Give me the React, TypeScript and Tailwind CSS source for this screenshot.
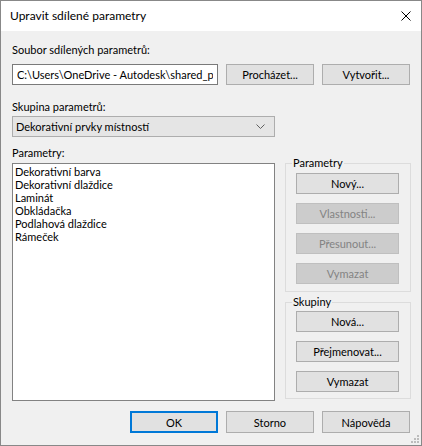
import React from "react";

const font = "font-['Lato','Noto_Sans',sans-serif]";

function Btn({
  children,
  className = "",
  disabled,
}: {
  children: React.ReactNode;
  className?: string;
  disabled?: boolean;
}) {
  return (
    <button
      disabled={disabled}
      className={
        "flex h-[21px] items-center justify-center border leading-none " +
        (disabled
          ? "border-[#bfbfbf] bg-[#cccccc] text-[#838383] "
          : "border-[#adadad] bg-[#e1e1e1] text-black ") +
        className
      }
    >
      {children}
    </button>
  );
}

function Group({
  title,
  children,
  className = "",
}: {
  title: string;
  children: React.ReactNode;
  className?: string;
}) {
  return (
    <fieldset className={"border border-[#dcdcdc] px-[10px] " + className}>
      <legend className="-ml-[4px] px-[1px] leading-[16px]">{title}</legend>
      <div className="flex flex-col gap-[9px]">{children}</div>
    </fieldset>
  );
}

export default function App() {
  const params = [
    "Dekorativní barva",
    "Dekorativní dlaždice",
    "Laminát",
    "Obkládačka",
    "Podlahová dlaždice",
    "Rámeček",
  ];

  return (
    <div
      className={
        "relative flex h-[446px] w-[422px] flex-col border border-[#888888] bg-[#f0f0f0] text-[11px] text-black " +
        font
      }
    >
      {/* title bar */}
      <div className="flex h-[30px] shrink-0 items-center justify-between bg-white pr-[10px] pl-[9px]">
        <span className="text-[12px] leading-[16px]">Upravit sdílené parametry</span>
        <svg width="10" height="10" viewBox="0 0 10 10" className="block">
          <path d="M0.5 0.5 L9.5 9.5 M9.5 0.5 L0.5 9.5" stroke="#000" strokeWidth="1" />
        </svg>
      </div>

      <div className="flex flex-1 flex-col px-[11px]">
        <label className="mt-[11px] leading-[16px]">Soubor sdílených parametrů:</label>
        <div className="mt-[6px] flex gap-[8px]">
          <input
            readOnly
            value="C:\Users\OneDrive - Autodesk\shared_parameters.txt"
            className={"h-[21px] w-[206px] border border-[#7a7a7a] bg-white px-[4px] text-[11px] outline-none " + font}
          />
          <Btn className="w-[88px]">Procházet...</Btn>
          <Btn className="w-[88px]">Vytvořit...</Btn>
        </div>

        <label className="mt-[14px] leading-[16px]">Skupina parametrů:</label>
        <div className="mt-[1px] flex h-[21px] w-[263px] items-center justify-between border border-[#adadad] bg-[#e5e5e5] pr-[9px] pl-[3px]">
          <span className="leading-none">Dekorativní prvky místností</span>
          <svg width="9" height="5" viewBox="0 0 9 5" className="block">
            <path d="M0.5 0.5 L4.5 4.5 L8.5 0.5" stroke="#606060" strokeWidth="1" fill="none" />
          </svg>
        </div>

        <div className="mt-[8px] flex gap-[10px]">
          <div className="flex w-[263px] flex-col">
            <label className="leading-[16px]">Parametry:</label>
            <div className="mt-[2px] h-[238px] border border-[#828282] bg-white px-[2px] pt-[1px]">
              {params.map((p) => (
                <div key={p} className="leading-[13px]">
                  {p}
                </div>
              ))}
            </div>
          </div>

          <div className="-mr-[1px] mt-[10px] flex w-[126px] flex-col">
            <Group title="Parametry" className="pt-[2px] pb-[7px]">
              <Btn className="w-[103px]">Nový...</Btn>
              <Btn className="w-[103px]" disabled>
                Vlastnosti...
              </Btn>
              <Btn className="w-[103px]" disabled>
                Přesunout...
              </Btn>
              <Btn className="w-[103px]" disabled>
                Vymazat
              </Btn>
            </Group>
            <Group title="Skupiny" className="mt-[2px] pt-[1px] pb-[6px]">
              <Btn className="w-[103px]">Nová...</Btn>
              <Btn className="w-[103px]">Přejmenovat...</Btn>
              <Btn className="w-[103px]">Vymazat</Btn>
            </Group>
          </div>
        </div>

        <div className="mt-[10px] flex justify-end gap-[8px]">
          <Btn className="h-[22px] w-[88px] border-2 !border-[#0078d7]">OK</Btn>
          <Btn className="h-[22px] w-[88px]">Storno</Btn>
          <Btn className="h-[22px] w-[88px]">Nápověda</Btn>
        </div>
      </div>

      {/* size grip */}
      <svg width="8" height="8" viewBox="0 0 8 8" className="absolute right-[2px] bottom-[2px] block">
        <rect x="6" y="0" width="2" height="2" fill="#bcbcbc" />
        <rect x="3" y="3" width="2" height="2" fill="#bcbcbc" />
        <rect x="6" y="3" width="2" height="2" fill="#bcbcbc" />
        <rect x="0" y="6" width="2" height="2" fill="#bcbcbc" />
        <rect x="3" y="6" width="2" height="2" fill="#bcbcbc" />
        <rect x="6" y="6" width="2" height="2" fill="#bcbcbc" />
      </svg>
    </div>
  );
}
